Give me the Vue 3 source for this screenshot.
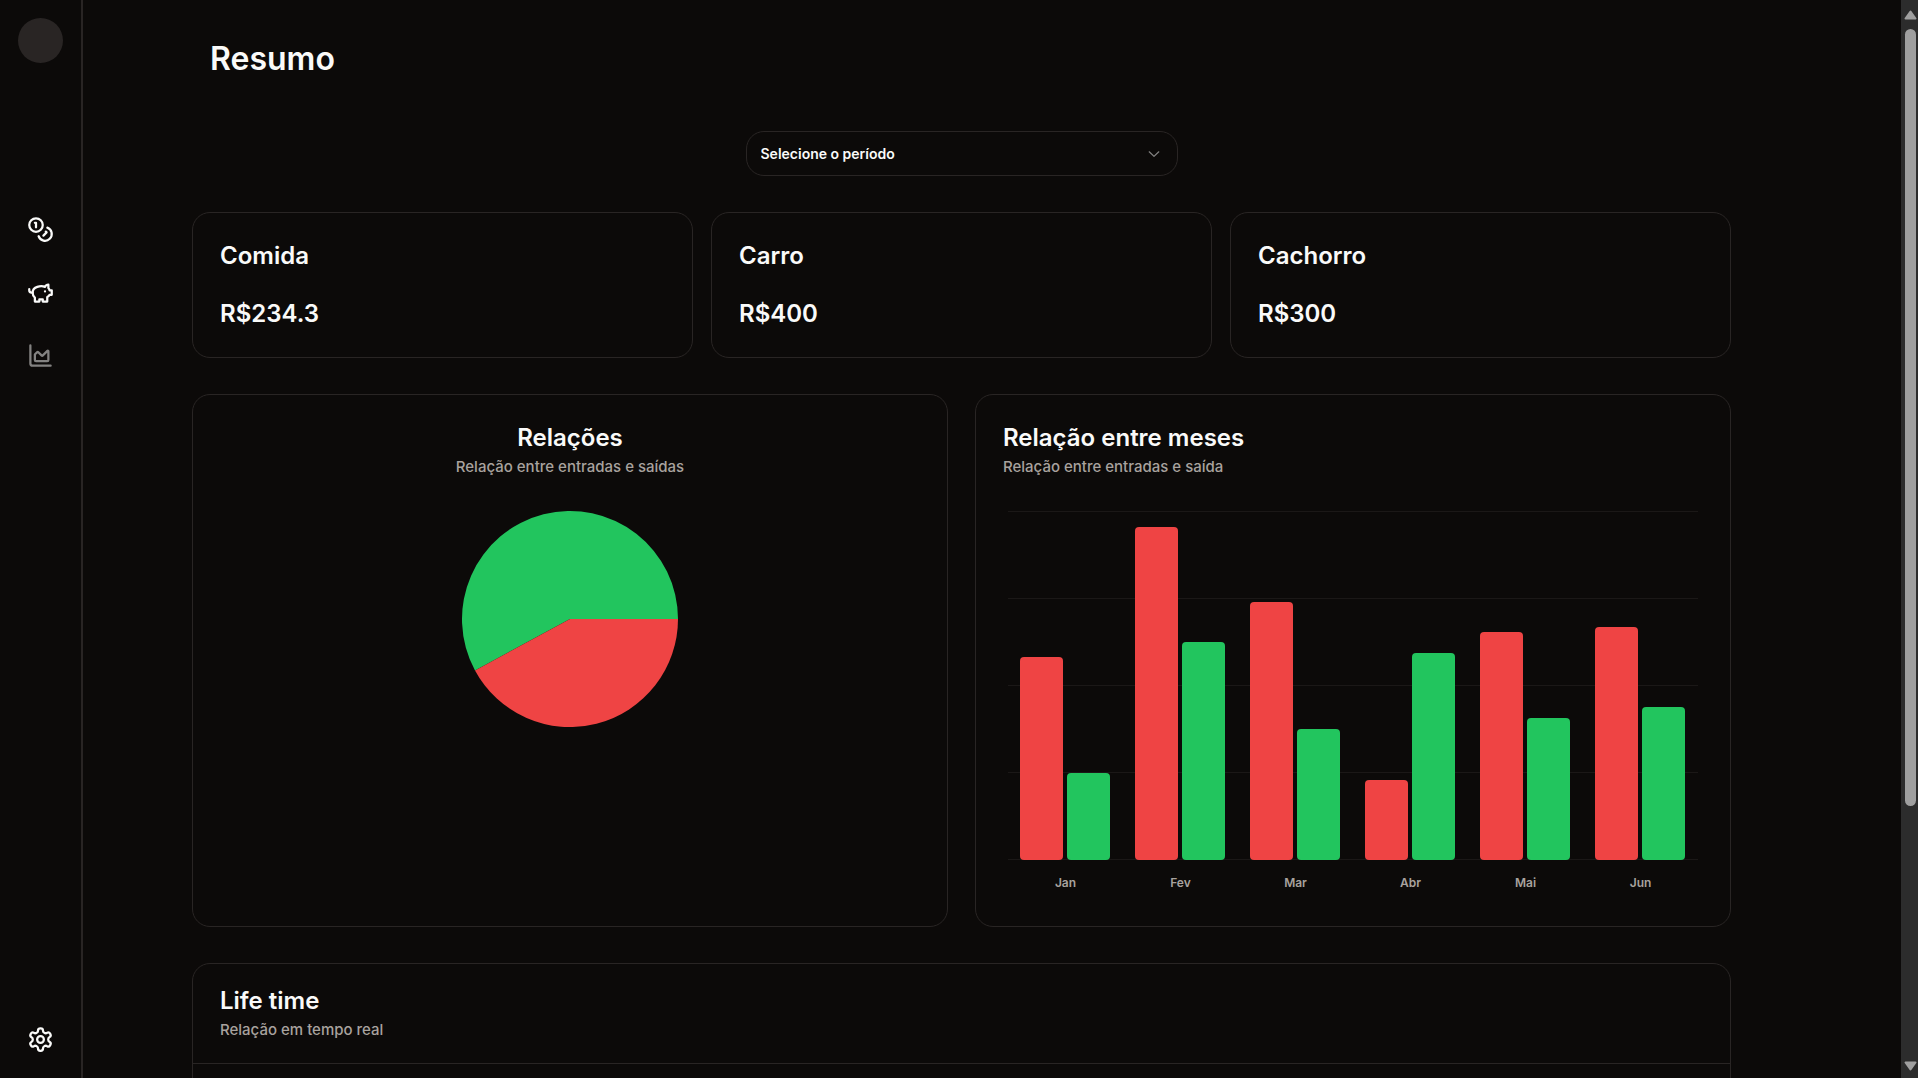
<script setup>
import { ref } from 'vue'

const navItems = [
  {
    label: 'Transações',
    active: false,
    paths: [
      'M2 8a6 6 0 1 0 12 0a6 6 0 1 0-12 0',
      'M18.09 10.37A6 6 0 1 1 10.34 18',
      'M7 6h1v4',
      'm16.71 13.88.7.71-2.82 2.82',
    ],
  },
  {
    label: 'Economias',
    active: false,
    paths: [
      'M19 5c-1.5 0-2.8 1.4-3 2-3.5-1.5-11-.3-11 5 0 1.8 0 3 2 4.5V20h4v-2h3v2h4v-4c1-.5 1.7-1 2-2h2v-4h-2c0-1-.5-1.5-1-2V5z',
      'M2 9v1c0 1.1.9 2 2 2h1',
      'M16 11h.01',
    ],
  },
  {
    label: 'Resumo',
    active: true,
    paths: [
      'M3 3v16a2 2 0 0 0 2 2h16',
      'M7 11.207a.5.5 0 0 1 .146-.353l2-2a.5.5 0 0 1 .708 0l3.292 3.292a.5.5 0 0 0 .708 0l4.292-4.292a.5.5 0 0 1 .854.353V16a1 1 0 0 1-1 1H8a1 1 0 0 1-1-1z',
    ],
  },
]

const period = ref('')

const categories = [
  { name: 'Comida', value: 'R$234.3' },
  { name: 'Carro', value: 'R$400' },
  { name: 'Cachorro', value: 'R$300' },
]

const maxValue = 320
const months = [
  { name: 'Jan', out: 186, in: 80 },
  { name: 'Fev', out: 305, in: 200 },
  { name: 'Mar', out: 237, in: 120 },
  { name: 'Abr', out: 73, in: 190 },
  { name: 'Mai', out: 209, in: 130 },
  { name: 'Jun', out: 214, in: 140 },
]
const barHeight = (value) => ({ height: `${(value / maxValue) * 100}%` })
</script>

<template>
  <div class="layout">
    <aside class="sidebar">
      <div class="avatar"></div>
      <nav class="nav">
        <a
          v-for="item in navItems"
          :key="item.label"
          href="#"
          class="nav-link"
          :class="{ active: item.active }"
          :aria-label="item.label"
        >
          <svg class="icon" viewBox="0 0 24 24">
            <path v-for="d in item.paths" :key="d" :d="d" />
          </svg>
        </a>
      </nav>
      <a href="#" class="nav-link" aria-label="Configurações">
        <svg class="icon" viewBox="0 0 24 24">
          <path
            d="M12.22 2h-.44a2 2 0 0 0-2 2v.18a2 2 0 0 1-1 1.73l-.43.25a2 2 0 0 1-2 0l-.15-.08a2 2 0 0 0-2.73.73l-.22.38a2 2 0 0 0 .73 2.73l.15.1a2 2 0 0 1 1 1.72v.51a2 2 0 0 1-1 1.74l-.15.09a2 2 0 0 0-.73 2.73l.22.38a2 2 0 0 0 2.73.73l.15-.08a2 2 0 0 1 2 0l.43.25a2 2 0 0 1 1 1.73V20a2 2 0 0 0 2 2h.44a2 2 0 0 0 2-2v-.18a2 2 0 0 1 1-1.73l.43-.25a2 2 0 0 1 2 0l.15.08a2 2 0 0 0 2.73-.73l.22-.39a2 2 0 0 0-.73-2.73l-.15-.08a2 2 0 0 1-1-1.74v-.5a2 2 0 0 1 1-1.74l.15-.09a2 2 0 0 0 .73-2.73l-.22-.38a2 2 0 0 0-2.73-.73l-.15.08a2 2 0 0 1-2 0l-.43-.25a2 2 0 0 1-1-1.73V4a2 2 0 0 0-2-2z"
          />
          <circle cx="12" cy="12" r="3" />
        </svg>
      </a>
    </aside>

    <main class="content">
      <h1 class="page-title">Resumo</h1>

      <div class="period">
        <select v-model="period" class="period-select" aria-label="Período">
          <option value="">Selecione o período</option>
        </select>
        <svg class="chevron" viewBox="0 0 15 15">
          <path
            d="M3.135 6.158a.5.5 0 0 1 .707-.023L7.5 9.565l3.658-3.43a.5.5 0 0 1 .684.73l-4 3.75a.5.5 0 0 1-.684 0l-4-3.75a.5.5 0 0 1-.023-.707Z"
          />
        </svg>
      </div>

      <section class="categories">
        <article v-for="c in categories" :key="c.name" class="card category">
          <h2 class="card-title">{{ c.name }}</h2>
          <p class="amount">{{ c.value }}</p>
        </article>
      </section>

      <section class="charts">
        <article class="card chart-card centered">
          <h2 class="card-title">Relações</h2>
          <p class="card-subtitle">Relação entre entradas e saídas</p>
          <svg class="pie" viewBox="-108 -108 216 216">
            <path class="slice-in" d="M0 0L108 0A108 108 0 1 0 -95 51.4Z" />
            <path class="slice-out" d="M0 0L-95 51.4A108 108 0 0 0 108 0Z" />
          </svg>
        </article>

        <article class="card chart-card">
          <h2 class="card-title">Relação entre meses</h2>
          <p class="card-subtitle">Relação entre entradas e saída</p>
          <div class="bar-chart">
            <div class="plot">
              <div class="grid-lines">
                <span v-for="n in 5" :key="n" class="grid-line"></span>
              </div>
              <div class="bars">
                <div v-for="m in months" :key="m.name" class="month">
                  <div class="bar bar-out" :style="barHeight(m.out)"></div>
                  <div class="bar bar-in" :style="barHeight(m.in)"></div>
                </div>
              </div>
            </div>
            <div class="axis">
              <span v-for="m in months" :key="m.name" class="axis-label">{{ m.name }}</span>
            </div>
          </div>
        </article>
      </section>

      <section class="card timeline">
        <header class="timeline-header">
          <h2 class="card-title">Life time</h2>
          <p class="card-subtitle">Relação em tempo real</p>
        </header>
        <div class="timeline-body"></div>
      </section>
    </main>

    <div class="scrollbar">
      <svg class="arrow" viewBox="0 0 13 10"><path d="M6.5 1.5L11.5 8.5H1.5Z" /></svg>
      <div class="track"><div class="thumb"></div></div>
      <svg class="arrow" viewBox="0 0 13 10"><path d="M6.5 8.5L1.5 1.5H11.5Z" /></svg>
    </div>
  </div>
</template>

<style>
body {
  background: #0c0a09;
}
</style>

<style scoped>
.layout {
  display: flex;
  height: 100vh;
  background: #0c0a09;
  color: #fafaf9;
  font-family: Inter, 'Liberation Sans', sans-serif;
  font-weight: 600;
}

h1,
h2,
p {
  margin: 0;
  font-weight: 600;
}

.sidebar {
  box-sizing: border-box;
  flex: none;
  display: flex;
  flex-direction: column;
  align-items: center;
  width: 83px;
  padding: 18px 0 25px;
  border-right: 2px solid #292524;
}

.avatar {
  width: 45px;
  height: 45px;
  border-radius: 50%;
  background: #292524;
}

.nav {
  flex: 1;
  display: flex;
  flex-direction: column;
  gap: 36px;
  padding-top: 153px;
}

.nav-link {
  display: block;
  width: 27px;
  height: 27px;
  color: #fafaf9;
}

.nav-link.active {
  opacity: 0.5;
}

.icon {
  display: block;
  width: 27px;
  height: 27px;
  fill: none;
  stroke: currentColor;
  stroke-width: 2;
  stroke-linecap: round;
  stroke-linejoin: round;
}

.content {
  flex: 1;
  min-width: 0;
  padding: 39px 170px 0 109px;
  overflow-y: auto;
  scrollbar-width: none;
}

.page-title {
  padding-left: 18px;
  font-size: 32px;
  line-height: 40px;
}

.period {
  position: relative;
  width: 432px;
  margin: 52px auto 36px;
}

.period-select {
  display: block;
  box-sizing: border-box;
  width: 100%;
  height: 45px;
  padding: 0 40px 0 14px;
  border: 1px solid #292524;
  border-radius: 18px;
  background: transparent;
  color: inherit;
  font: inherit;
  font-size: 14px;
  appearance: none;
}

.chevron {
  position: absolute;
  top: 13px;
  right: 15px;
  width: 18px;
  height: 18px;
  fill: #fafaf9;
  opacity: 0.5;
  pointer-events: none;
}

.card {
  border: 1px solid #292524;
  border-radius: 18px;
}

.card-title {
  font-size: 24px;
  line-height: 30px;
}

.card-subtitle {
  margin-top: 2px;
  color: #a8a29e;
  font-size: 15px;
  font-weight: 500;
  line-height: 24px;
}

.categories {
  display: grid;
  grid-template-columns: repeat(3, 1fr);
  gap: 18px;
}

.category {
  padding: 28px 27px;
}

.amount {
  margin-top: 28px;
  font-size: 24px;
  line-height: 30px;
}

.charts {
  display: grid;
  grid-template-columns: repeat(2, 1fr);
  gap: 27px;
  margin: 36px 0;
}

.chart-card {
  padding: 28px 27px 33px;
}

.centered {
  text-align: center;
}

.pie {
  display: block;
  width: 216px;
  height: 216px;
  margin: 32px auto 0;
}

.slice-in,
.bar-in {
  fill: #22c55e;
  background: #22c55e;
}

.slice-out,
.bar-out {
  fill: #ef4444;
  background: #ef4444;
}

.bar-chart {
  padding: 32px 5px 0;
}

.plot {
  display: grid;
  height: 349px;
}

.grid-lines,
.bars {
  grid-area: 1 / 1;
}

.grid-lines {
  display: flex;
  flex-direction: column;
  justify-content: space-between;
}

.grid-line {
  height: 1px;
  background: #1b1817;
}

.bars,
.axis {
  display: grid;
  grid-template-columns: repeat(6, 1fr);
}

.month {
  display: flex;
  align-items: flex-end;
  gap: 4px;
  padding: 0 13px 0 12px;
}

.bar {
  flex: 1;
  border-radius: 4px;
}

.axis {
  margin-top: 13px;
}

.axis-label {
  color: #a8a29e;
  font-size: 12px;
  line-height: 20px;
  text-align: center;
}

.timeline-header {
  padding: 22px 27px 21px;
  border-bottom: 1px solid #292524;
}

.timeline-body {
  height: 270px;
}

.scrollbar {
  flex: none;
  display: flex;
  flex-direction: column;
  align-items: center;
  box-sizing: border-box;
  width: 17px;
  padding: 10px 0 7px 2px;
  background: #2c2c2c;
}

.arrow {
  width: 13px;
  height: 10px;
  fill: #9f9f9f;
  stroke: #9f9f9f;
  stroke-width: 2;
  stroke-linejoin: round;
}

.track {
  flex: 1;
  margin: 9px 0;
}

.thumb {
  width: 11px;
  height: 76%;
  border-radius: 6px;
  background: #9f9f9f;
}
</style>
